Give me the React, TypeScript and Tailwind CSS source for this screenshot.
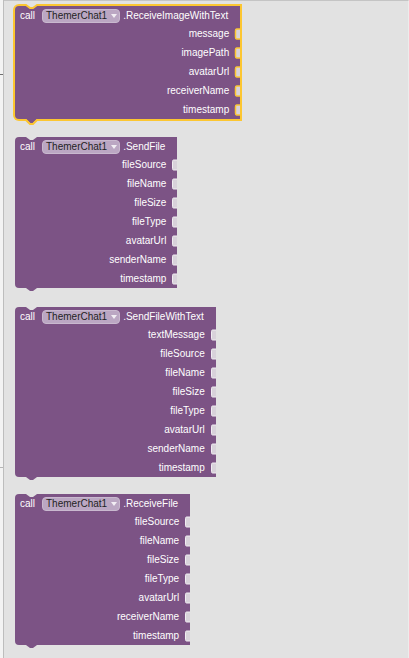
import React from 'react'

type BlockDef = {
  method: string
  args: string[]
  selected?: boolean
  mt: string
}

const BLOCKS: BlockDef[] = [
  { method: '.ReceiveImageWithText', args: ['message', 'imagePath', 'avatarUrl', 'receiverName', 'timestamp'], selected: true, mt: 'mt-0' },
  { method: '.SendFile', args: ['fileSource', 'fileName', 'fileSize', 'fileType', 'avatarUrl', 'senderName', 'timestamp'], mt: 'mt-[18px]' },
  { method: '.SendFileWithText', args: ['textMessage', 'fileSource', 'fileName', 'fileSize', 'fileType', 'avatarUrl', 'senderName', 'timestamp'], mt: 'mt-[19px]' },
  { method: '.ReceiveFile', args: ['fileSource', 'fileName', 'fileSize', 'fileType', 'avatarUrl', 'receiverName', 'timestamp'], mt: 'mt-[17px]' },
]

const FONT = { fontFamily: '"Liberation Sans", Arial, sans-serif' }

function Socket({ selected }: { selected?: boolean }) {
  // value input cut into the right edge of the block
  return (
    <svg width="6" height="12" viewBox="0 0 6 12" className="block shrink-0">
      <path d="M6 1 L2.5 1 C1.5 1 1.5 2 1.5 3 L1.5 9 C1.5 10 1.5 11 2.5 11 L6 11 Z" fill="#d8d2da" />
      <path
        d="M6 1 L2.5 1 C1.5 1 1.5 2 1.5 3 L1.5 9 C1.5 10 1.5 11 2.5 11 L6 11"
        fill="none"
        stroke={selected ? '#fcc631' : '#f1edf2'}
        strokeWidth={selected ? 1.5 : 1}
      />
    </svg>
  )
}

function Block({ method, args, selected, mt }: BlockDef) {
  return (
    <div className={`relative w-fit ${mt}`}>
      <div
        className={`flex flex-col bg-[#7c5385] rounded-l-[4px] pt-[2px] text-white text-[10px] leading-none ${
          selected ? 'ring-2 ring-[#fcc631]' : ''
        }`}
      >
        <div className="flex items-center h-[16px] pl-[5px] pr-[12px]">
          <span>call</span>
          <span className="ml-[7px] flex items-center h-[14px] pl-[3px] pr-[2px] rounded-[4px] bg-[#bba7c3] border border-[#c9b9cf] text-[#1f1f1f]">
            ThemerChat1
            <svg width="6" height="4" viewBox="0 0 6 4" className="ml-[4px]">
              <path d="M0 0 L6 0 L3 4 Z" fill="#f2eef4" />
            </svg>
          </span>
          <span className="ml-[3px]">{method}</span>
        </div>
        {args.map((a) => (
          <div key={a} className="flex items-center justify-end h-[19px]">
            <span>{a}</span>
            <span className="ml-[5px]">
              <Socket selected={selected} />
            </span>
          </div>
        ))}
      </div>
      {/* previous-statement notch on top */}
      {selected ? (
        <svg width="13" height="6" viewBox="0 0 13 6" className="absolute left-[10px] -top-[2px]">
          <path d="M0 0 L13 0 L13 1.5 L12 1.5 L8 4 L5 4 L1 1.5 L0 1.5 Z" fill="#e2e2e2" />
          <path d="M0 1 L1 1 L5 4 L8 4 L12 1 L13 1" fill="none" stroke="#fcc631" strokeWidth="2" />
        </svg>
      ) : (
        <svg width="11" height="4" viewBox="0 0 11 4" className="absolute left-[11px] top-0">
          <path d="M0 0 L4 3 L7 3 L11 0 Z" fill="#e2e2e2" />
        </svg>
      )}
      {/* next-statement tab at bottom */}
      {selected ? (
        <svg width="13" height="7" viewBox="0 0 13 7" className="absolute left-[10px] top-full">
          <path d="M1 0 L5 4 L8 4 L12 0 Z" fill="#7c5385" />
          <path d="M0 1 L1 1 L5 5 L8 5 L12 1 L13 1" fill="none" stroke="#fcc631" strokeWidth="2" />
        </svg>
      ) : (
        <svg width="11" height="4" viewBox="0 0 11 4" className="absolute left-[11px] top-full">
          <path d="M0 0 L4 3 L7 3 L11 0 Z" fill="#7c5385" />
        </svg>
      )}
    </div>
  )
}

export default function App() {
  return (
    <div className="flex w-[409px] h-[658px] overflow-hidden" style={FONT}>
      <div className="flex flex-col w-[4px] bg-[#f3f3f3] border-r border-[#bdbdbd]">
        <div className="h-[74px]" />
        <div className="h-px w-[3px] bg-[#6f6f6f]" />
        <div className="h-[392px]" />
        <div className="h-px w-[3px] bg-[#b5b5b5]" />
      </div>
      <div className="flex-1 flex flex-col bg-[#e2e2e2] border-t border-[#c4c4c4] border-r border-r-[#ececec] pl-[11px] pt-[5px]">
        {BLOCKS.map((b) => (
          <Block key={b.method} {...b} />
        ))}
      </div>
    </div>
  )
}
